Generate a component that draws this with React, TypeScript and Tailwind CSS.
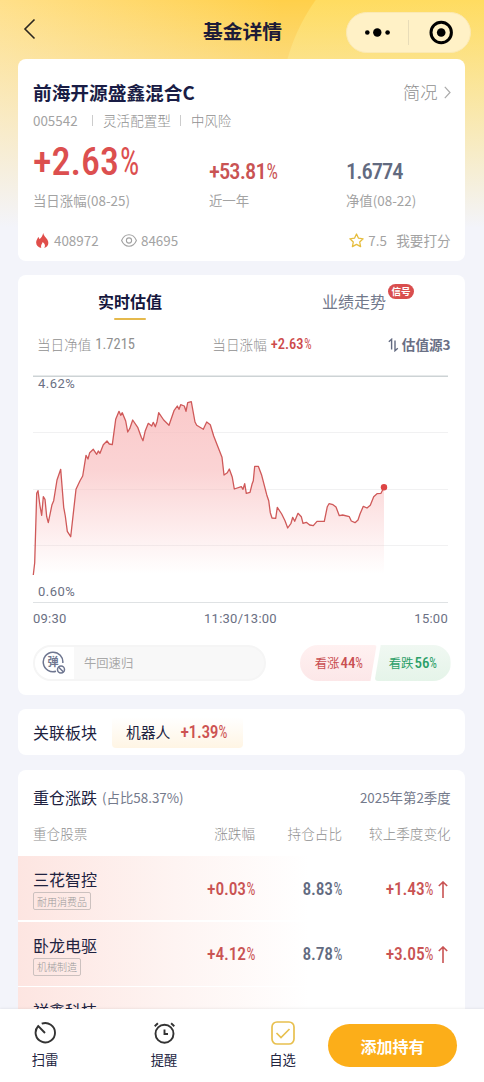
import type { ReactNode } from 'react';
import clsx from 'clsx';

const POINTS =
  '0.3,199 1.7,186.7 3.7,117.3 5,114.7 7,130 8.7,139.3 10.3,120.7 12,123.3 13.7,140.7 15.3,146.7 19,128.7 20.7,124.7 24,104 27.7,93.3 30.7,131.3 32.3,140 34.3,155.3 37.7,160.7 43,113.3 47,104.7 49.7,100 53,79.3 55,83 56.7,76.7 60.3,73.3 63.7,78.3 65.3,75 67,77.3 70.3,68.7 74,65 76.3,68 79.3,68.7 82.7,43.3 86,35.3 87.7,39.3 89.3,36.7 92.7,45 94.7,56 96.7,52.7 99.7,44 104.7,51.3 108.3,61.3 110,64.7 112.3,54.7 115.3,47.3 118.7,50 120.3,46.3 122.3,50.7 124,45.7 125.7,36.7 130.7,44 136,49.3 141,34.7 144.3,30 146,33.3 147.7,28.7 151.3,30 153,35.3 154.7,26.7 158.3,25.7 162,46 163.7,49.3 170.3,53.3 173.7,46 177.3,48.7 180.7,60 184.3,69.3 189,81.3 191,99 194.3,96.7 196.3,93 199.3,101.3 201.3,113 208.3,110.7 210,113.3 211.7,107.7 213.3,117.3 217,116.3 219,108.3 220.3,104.7 221.7,90.3 225.3,90.3 228.7,99.3 233.7,118.7 235.7,124.7 237.3,136.7 239,142 242.7,142.3 244.3,131.3 248.7,138 252,144.7 254.7,152 258,147.3 259.7,141.3 261.7,145.3 265,137.3 268.3,140.7 270,147.3 273.3,146.3 276.7,149 280.3,149.7 284,145.3 291.3,145.3 294.3,130.7 296,127.7 300,128.7 303,131 306.3,139.7 309.7,139 316.3,140.7 318.3,145 322,146.7 325,144 327,138 330.3,130.3 334,132 337.3,129.3 340.7,120.7 344,117.7 348,117.3 351,111.3';

interface Stock {
  name: string;
  detail?: { tag: string; change: string; ratio: string; diff: string };
}

const STOCKS: Stock[] = [
  { name: '三花智控', detail: { tag: '耐用消费品', change: '+0.03', ratio: '8.83', diff: '+1.43' } },
  { name: '卧龙电驱', detail: { tag: '机械制造', change: '+4.12', ratio: '8.78', diff: '+3.05' } },
  { name: '祥鑫科技' },
];

function Num({ children, percent, className }: { children: ReactNode; percent?: boolean; className?: string }) {
  return (
    <span
      className={clsx(
        "inline-flex whitespace-nowrap font-['Roboto_Condensed',Roboto,sans-serif] font-medium [font-stretch:75%]",
        className,
      )}
    >
      {children}
      {percent && <span className="-mr-[0.13em] inline-block origin-left scale-x-[0.8] pl-[0.03em] font-normal">%</span>}
    </span>
  );
}

function Header() {
  return (
    <header className="flex h-[59px] shrink-0 items-start justify-between pl-[22px] pr-[13px]">
      <svg className="mt-[18px] h-[22px] w-[110px]" viewBox="0 0 110 22" fill="none" stroke="#2b2620" strokeWidth="1.6">
        <path d="M12.5 1.5 3 11l9.5 9.5" />
      </svg>
      <h1 className="ml-[7px] mt-[16px] text-[19.8px] leading-[30px] font-bold text-[#1d1b38]">基金详情</h1>
      <div className="mt-[12px] flex h-[41px] w-[125px] items-center rounded-full border border-[#fbe9b4] bg-[#fff1c6]">
        <svg className="h-[39px] w-[123px]" viewBox="0 0 123 39">
          <circle cx="20.3" cy="19.5" r="2.3" />
          <circle cx="30.3" cy="19.5" r="4.2" />
          <circle cx="40.6" cy="19.5" r="2.3" />
          <path d="M61.5 7v25" stroke="#e8dcb8" />
          <circle cx="94.2" cy="19.5" r="10.2" fill="none" stroke="#000" strokeWidth="3" />
          <circle cx="94.2" cy="19.5" r="4.3" />
        </svg>
      </div>
    </header>
  );
}

function SummaryCard() {
  return (
    <section className="mr-[18.7px] ml-[18.3px] h-[201.5px] shrink-0 rounded-[8px] bg-white px-[14.7px] pt-[19px] text-[13.4px] text-[#a3a3a3]">
      <div className="flex h-[28px] items-center justify-between">
        <h2 className="text-[18.7px] font-bold text-[#191c45]">前海开源盛鑫混合C</h2>
        <div className="flex items-center text-[17.3px] font-light text-[#909090]">
          简况
          <svg className="ml-[6px] h-[13px] w-[7px]" viewBox="0 0 7 13" fill="none" stroke="#aaa" strokeWidth="1.2">
            <path d="M.8.8 6 6.5.8 12.2" />
          </svg>
        </div>
      </div>
      <div className="flex h-[28px] items-center">
        <span className="w-[59px]">005542</span>
        <i className="h-[11px] w-px bg-[#ccc]" />
        <span className="ml-[10px] w-[77px] text-[13.6px] font-light text-[#909090]">灵活配置型</span>
        <i className="h-[11px] w-px bg-[#ccc]" />
        <span className="ml-[10px] font-light text-[#909090]">中风险</span>
      </div>
      <div className="flex h-[54px] items-end">
        <div className="w-[176px]">
          <Num percent className="text-[38px] leading-[52px] text-[#dc4f4f]">+2.63</Num>
        </div>
        <div className="w-[137px]">
          <Num percent className="text-[22.5px] leading-[33px] tracking-[-0.04em] text-[#c95353]">+53.81</Num>
        </div>
        <Num className="text-[22.5px] leading-[33px] tracking-[-0.045em] text-[#626a80]">1.6774</Num>
      </div>
      <div className="flex h-[24px] items-center">
        <span className="w-[176px]">当日涨幅(08-25)</span>
        <span className="w-[137px]">近一年</span>
        <span>净值(08-22)</span>
      </div>
      <div className="mt-[15px] flex h-[26px] items-center">
        <svg className="ml-[3px] h-[15px] w-[13px]" viewBox="0 0 13 15">
          <path
            d="M7.2 0C7.5 2.7 10 4.4 11.3 6.6c2.4 3.8.4 7.6-3.2 8.4 1.5-2 1-4-1.4-5.9C6.4 11 4.3 11.7 5.3 15 1.3 14.2-.7 11 .5 7.5 1 6.2 1.8 5.3 2.2 4c.8.7 1.1 1.5 1.2 2.2C5.5 4.7 6.7 2.5 7.2 0Z"
            fill="#e04e4a"
          />
        </svg>
        <span className="ml-[5px] w-[67px]">408972</span>
        <svg className="h-[13px] w-[16px]" viewBox="0 0 16 13" fill="none" stroke="#a2a2a2" strokeWidth="1.1">
          <path d="M.6 6.5C3.8-1.1 12.2-1.1 15.4 6.5 12.2 14.1 3.8 14.1.6 6.5Z" />
          <circle cx="8" cy="6.5" r="2.6" />
        </svg>
        <span className="ml-[4px]">84695</span>
        <svg className="ml-auto h-[15px] w-[15px]" viewBox="0 0 15 15" fill="none" stroke="#e6bd3d" strokeWidth="1.3" strokeLinejoin="round">
          <path d="m7.5 1 2 4.2 4.6.6-3.4 3.2.9 4.6-4.1-2.2-4.1 2.2.9-4.6L.9 5.8l4.6-.6Z" />
        </svg>
        <span className="ml-[4px] w-[28px]">7.5</span>
        <span className="text-[13.6px]">我要打分</span>
      </div>
    </section>
  );
}

function Chart() {
  return (
    <div className="mt-[18px] w-[415px]">
      <div className="grid font-['Roboto',sans-serif] text-[13px] tracking-[0.5px] text-[#6b7083]">
        <svg className="col-start-1 row-start-1 h-[228px] w-[415px] overflow-visible" viewBox="0 0 415 228">
          <defs>
            <linearGradient id="area" gradientUnits="userSpaceOnUse" x1="0" y1="25" x2="0" y2="198">
              <stop offset="0" stopColor="#f9bcbd" stopOpacity="0.8" />
              <stop offset="0.4" stopColor="#f9bcbd" stopOpacity="0.65" />
              <stop offset="1" stopColor="#f9bcbd" stopOpacity="0" />
            </linearGradient>
          </defs>
          <path d="M0 56.5h415M0 113.5h415M0 169.500h415" stroke="#f1f1f2" />
          <path d="M0 .2h415" stroke="#cdd3d5" strokeWidth="1.5" />
          <path d="M0 226.5h415" stroke="#dfe2e4" />
          <polygon points={`0,199 ${POINTS} 351,199`} fill="url(#area)" />
          <polyline points={POINTS} fill="none" stroke="#cf5959" strokeWidth="1.3" strokeLinejoin="round" />
          <circle cx="351" cy="111.3" r="3.2" fill="#dd4545" />
        </svg>
        <div className="col-start-1 row-start-1 flex flex-col justify-between pl-[5px] leading-[16px]">
          <span>4.62%</span>
          <span className="mb-[4px]">0.60%</span>
        </div>
      </div>
      <div className="mt-[5px] flex h-[20px] items-center justify-between font-['Roboto',sans-serif] text-[13px] tracking-[0.25px] text-[#6b7083]">
        <span>09:30</span>
        <span>11:30/13:00</span>
        <span>15:00</span>
      </div>
    </div>
  );
}

function ValuationCard() {
  return (
    <section className="mr-[18.7px] ml-[18.3px] mt-[14.5px] h-[419.5px] shrink-0 rounded-[8px] bg-white px-[14.7px]">
      <div className="flex h-[56px] pt-[12px]">
        <div className="flex w-[194px] flex-col items-center">
          <span className="text-[16px] leading-[28px] font-bold text-[#15163d]">实时估值</span>
          <i className="mt-[3px] h-[2px] w-[32px] rounded-full bg-[#e5b94c]" />
        </div>
        <div className="relative ml-[95px] h-[28px] text-[16px] leading-[28px] text-[#71788a]">
          业绩走势
          <span className="absolute -top-[3px] left-[66px] h-[15px] w-[26px] rounded-full bg-[#d94e4e] text-center text-[9.5px] leading-[15px] font-bold text-white">
            信号
          </span>
        </div>
      </div>
      <div className="flex h-[27px] items-center pl-[4px] text-[13.6px] font-light text-[#909090]">
        <span className="mr-[4px]">当日净值</span>
        <Num className="w-[117px] text-[14.5px] !font-normal">1.7215</Num>
        <span className="mr-[4px]">当日涨幅</span>
        <Num percent className="text-[14.5px] text-[#cd4b4b]">+2.63</Num>
        <svg className="mr-[3px] ml-auto h-[14px] w-[11px]" viewBox="0 0 11 14" fill="none" stroke="#626a80" strokeWidth="1.4">
          <path d="M.8 3.800 3.600 1.300V11.500M7 2.500v10.200L9.800 10.200" />
        </svg>
        <span className="font-bold text-[#6a7085]">估值源3</span>
      </div>
      <Chart />
      <div className="mt-[16px] flex h-[36px] items-center justify-between">
        <div className="flex h-[36px] w-[233px] items-center rounded-full border-2 border-[#f5f5f5] bg-[#f8f8f8]">
          <div className="flex h-[32px] w-[39px] items-center justify-center rounded-l-full bg-white">
            <svg className="h-[24px] w-[24px]" viewBox="0 0 24 24" fill="none" stroke="#6e7690" strokeWidth="1.5">
              <path d="M14 20.300A9.800 9.800 0 1 1 20.800 12" />
              <text x="11" y="15.2" textAnchor="middle" fontSize="11" fontWeight="700" fill="#6e7690" stroke="none">
                弹
              </text>
              <circle cx="19" cy="18.5" r="3.5" />
              <path d="m16.500 16 5 5" />
            </svg>
          </div>
          <span className="ml-[10px] text-[12.3px] text-[#a8a8a8]">牛回速归</span>
        </div>
        <div className="flex">
          <div className="flex h-[36px] w-[77px] items-center bg-linear-to-b from-[#fff1f1] to-[#fce7e8] pl-[15px] text-[12.4px] text-[#c94f52] [border-radius:18px_3px_3px_18px] [clip-path:polygon(0_0,100%_0,92%_100%,0_100%)]">
            看涨
            <Num percent className="ml-px text-[15px]">44</Num>
          </div>
          <div className="-ml-[2px] flex h-[36px] w-[76px] items-center bg-linear-to-b from-[#f0f8f2] to-[#e5f4e9] pl-[14px] text-[12.4px] text-[#2c9f69] [border-radius:3px_18px_18px_3px] [clip-path:polygon(8%_0,100%_0,100%_100%,0_100%)]">
            看跌
            <Num percent className="ml-px text-[15px]">56</Num>
          </div>
        </div>
      </div>
    </section>
  );
}

function SectorCard() {
  return (
    <section className="mr-[18.7px] ml-[18.3px] mt-[14px] flex h-[46.5px] shrink-0 items-center rounded-[8px] bg-white px-[14.7px] text-[16px] text-[#20223f]">
      <span className="pt-px">关联板块</span>
      <div className="mt-[2px] ml-[15px] flex h-[31px] w-[131px] items-center rounded-[4px] bg-linear-to-b from-white to-[#fff5e4] pb-px pl-[14px] text-[14.8px]">
        机器人
        <Num percent className="ml-[10px] text-[17.5px] tracking-[-0.02em] text-[#cd5351]">+1.39</Num>
      </div>
    </section>
  );
}

function HoldingsCard() {
  return (
    <section className="mr-[18.7px] ml-[18.3px] mt-[15px] shrink-0 rounded-t-[8px] bg-white pt-[13px]">
      <div className="flex h-[28px] items-center px-[14.7px] text-[13.4px] text-[#747a8c]">
        <span className="mr-[5px] text-[16px] text-[#20223f]">重仓涨跌</span>
        <span>(占比58.37%)</span>
        <span className="ml-auto">2025年第2季度</span>
      </div>
      <div className="flex h-[45px] items-center px-[14.7px] text-right text-[13.6px] font-light text-[#909090]">
        <span className="w-[140px] text-left">重仓股票</span>
        <span className="w-[82px]">涨跌幅</span>
        <span className="w-[87px]">持仓占比</span>
        <span className="flex-1">较上季度变化</span>
      </div>
      {STOCKS.map(({ name, detail }) => (
        <div
          key={name}
          className="mb-[1.5px] flex h-[64px] items-center bg-linear-to-r from-[#fde5e1] via-[#fef4f2] via-35% to-white to-65% px-[14.7px]"
        >
          <div className="flex h-full w-[126px] flex-col items-start pt-[11px]">
            <span className="text-[16px] leading-[24px] text-[#20223f]">{name}</span>
            {detail && (
              <span className="mt-px flex h-[18px] items-center rounded-[2px] border border-[#ccc1bf] px-[3px] text-[10px] font-light text-[#999]">
                {detail.tag}
              </span>
            )}
          </div>
          {detail && (
            <>
              <div className="flex w-[96px] justify-end pt-[2px]">
                <Num percent className="text-[17.5px] tracking-[-0.01em] text-[#c95353]">{detail.change}</Num>
              </div>
              <div className="flex w-[87px] justify-end pt-[2px]">
                <Num percent className="text-[17.5px] tracking-[-0.01em] text-[#626a80]">{detail.ratio}</Num>
              </div>
              <div className="flex flex-1 items-center justify-end pt-[2px]">
                <Num percent className="text-[17.5px] tracking-[-0.01em] text-[#c95353]">{detail.diff}</Num>
                <svg className="mr-[3px] ml-[4px] h-[17px] w-[10px]" viewBox="0 0 10 17" fill="none" stroke="#c95353" strokeWidth="1.6">
                  <path d="M5 17V1M.8 5 5 1l4.200 4" />
                </svg>
              </div>
            </>
          )}
        </div>
      ))}
    </section>
  );
}

function BottomBar() {
  return (
    <nav className="flex h-[73px] shrink-0 items-start bg-white text-[13.3px] text-[#22243f] shadow-[0_-1px_2px_rgba(0,0,0,0.06)]">
      <button className="flex w-[90px] flex-col items-center pt-[12px]">
        <svg className="h-[24px] w-[24px]" viewBox="0 0 24 24" fill="none" stroke="#333" strokeWidth="1.9">
          <path d="M8.700 2.700A9.700 9.700 0 1 1 5.300 5L12 12" />
        </svg>
        <span className="mt-[5px] leading-[20px]">扫雷</span>
      </button>
      <button className="ml-[29px] flex w-[90px] flex-col items-center pt-[12px]">
        <svg className="h-[24px] w-[24px]" viewBox="0 0 24 24" fill="none" stroke="#333" strokeWidth="1.9">
          <circle cx="12.500" cy="12.700" r="9" />
          <path d="M12.500 8.500V13h3.500M2.700 5.200l3.200-3M22.300 5.200l-3.200-3" />
        </svg>
        <span className="mt-[5px] leading-[20px]">提醒</span>
      </button>
      <button className="ml-[28px] flex w-[91px] flex-col items-center pt-[12px]">
        <svg className="h-[24px] w-[24px]" viewBox="0 0 24 24" fill="none" stroke="#e8c04f" strokeWidth="1.7">
          <rect x="1" y="1" width="22" height="22" rx="5" />
          <path d="m5.500 12 4.500 4.500 8.500-8.500" />
        </svg>
        <span className="mt-[5px] leading-[20px]">自选</span>
      </button>
      <button className="mt-[15px] h-[43px] w-[129px] rounded-full bg-[#fcae19] text-[16px] font-bold text-white">
        添加持有
      </button>
    </nav>
  );
}

export default function App() {
  return (
    <div className="flex h-[1082px] w-[484px] flex-col overflow-hidden bg-[#f3f4fa] font-['Noto_Sans_CJK_SC',sans-serif]">
      <main className="flex min-h-0 flex-1 flex-col overflow-hidden bg-[linear-gradient(to_bottom,transparent,#f3f4fa_228px),radial-gradient(circle_at_470px_110px,rgba(255,238,130,0.4)_189px,transparent_190px),linear-gradient(90deg,#ffe08a_0%,#ffd04a_58%,#ffd04a_100%)]">
        <Header />
        <SummaryCard />
        <ValuationCard />
        <SectorCard />
        <HoldingsCard />
      </main>
      <BottomBar />
    </div>
  );
}
